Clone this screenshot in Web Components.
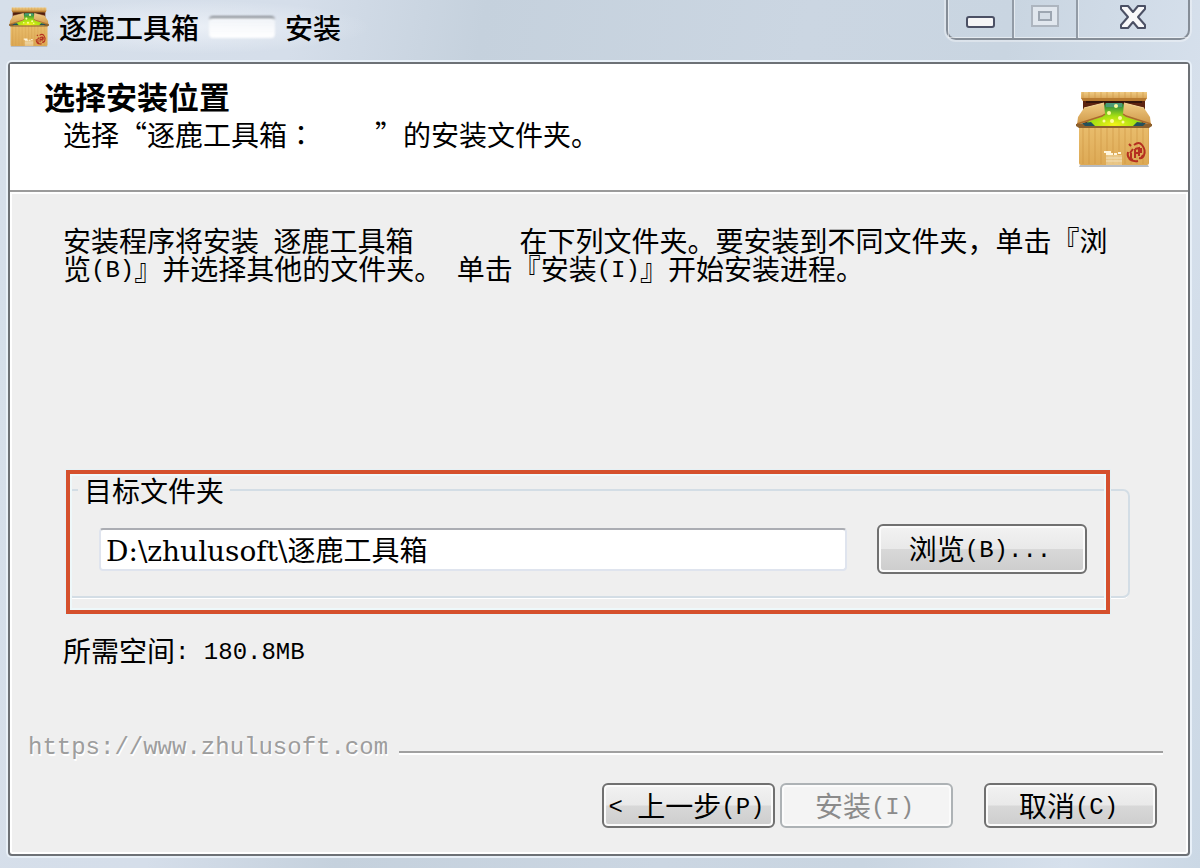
<!DOCTYPE html>
<html lang="zh-CN">
<head>
<meta charset="utf-8">
<title>逐鹿工具箱 安装</title>
<style>
  html, body {
    margin: 0;
    min-height: 100vh;
  }
  body {
    font: 28px/28px "Noto Sans CJK SC", sans-serif;
    color: #000;
  }
</style>
</head>
<body>
<setup-window></setup-window>

<script>
(function () {
  function define(name, html, setup) {
    const template = document.createElement("template");
    template.innerHTML = html.trim();
    customElements.define(name, class extends HTMLElement {
      constructor() {
        super();
        this.attachShadow({ mode: "open" });
        this.shadowRoot.appendChild(template.content.cloneNode(true));
      }
      connectedCallback() {
        if (setup) setup(this, this.shadowRoot);
      }
    });
  }

  // Half-width text: two characters take about one CJK cell.
  // No whitespace before the slot, it would show up in the line.
  define("half-width", `
    <style>
      :host {
        font-family: "Liberation Mono", monospace;
        font-size: 24px;
        line-height: 20px;
        vertical-align: 3px;
      }
      slot { white-space: pre; }
    </style><slot></slot>
  `);

  // Cardboard box, used in the title bar and in the page header
  define("box-icon", `
    <style>
      :host { display: block; flex: none; width: 76px; height: 76px; }
      svg { display: block; width: 100%; height: 100%; }
    </style>
    <svg viewBox="0 0 76 76" aria-hidden="true">
      <defs>
        <linearGradient id="front" x1="0" y1="0" x2="0" y2="1">
          <stop offset="0" stop-color="#e9bd6c"/>
          <stop offset="1" stop-color="#dda955"/>
        </linearGradient>
        <linearGradient id="flap" x1="0" y1="0" x2="0" y2="1">
          <stop offset="0" stop-color="#f0cb83"/>
          <stop offset="1" stop-color="#cf9747"/>
        </linearGradient>
        <radialGradient id="glow" cx=".5" cy=".9" r=".8">
          <stop offset="0" stop-color="#f4f218"/>
          <stop offset=".45" stop-color="#a4df12"/>
          <stop offset="1" stop-color="#2f8b3e"/>
        </radialGradient>
        <pattern id="ribs" width="6" height="8" patternUnits="userSpaceOnUse">
          <rect width="2" height="8" fill="#c98f3c" opacity=".28"/>
        </pattern>
      </defs>
      <path d="M4 74h68l1 2H3z" fill="#b8bcc2"/>
      <path d="M7 8h62v27H7z" fill="#5d2410"/>
      <path d="M10 9h56v3H10z" fill="#34150b"/>
      <path d="M5 1h66v6l-2 3H7L5 7z" fill="url(#flap)"/>
      <path d="M5 1h66v6H5z" fill="url(#ribs)"/>
      <path d="M5 7l2 3h62l2-3z" fill="#b87b31"/>
      <path d="M30 12h16l8 7 16 17H6l17-15z" fill="url(#glow)"/>
      <path d="M30 12h16v4H30z" fill="#4c9a77"/>
      <path d="M1 33l14-2 4 4H2zM75 33l-14-2-4 4h17z" fill="#23515d"/>
      <path d="M8 17l20-5 1 11-3 3L1 34l1-8z" fill="url(#flap)"/>
      <path d="M68 17l-20-5-1 11 3 3 25 8-1-8z" fill="url(#flap)"/>
      <path d="M8 17l20-5M68 17l-20-5" stroke="#f6d899" fill="none"/>
      <path d="M1 33l25-8 3-2M75 33l-25-8-3-2" stroke="#a96b2c" stroke-width="1.5" fill="none"/>
      <path d="M3 35h70v37q0 2-2 2H5q-2 0-2-2z" fill="url(#front)"/>
      <path d="M3 35h70v38H3z" fill="url(#ribs)"/>
      <path d="M0 33h7l2 2h58l2-2h7v2l-3 2H3l-3-2z" fill="#8c602c"/>
      <g fill="#fffb9c">
        <circle cx="40" cy="15" r="2"/><circle cx="33" cy="22" r="2"/>
        <circle cx="44" cy="27" r="2"/><circle cx="36" cy="30" r="2"/>
        <circle cx="28" cy="30" r="1.5"/><circle cx="47" cy="31" r="1.5"/>
      </g>
      <path d="M30 64h16v10H30z" fill="#f0d8a7" opacity=".6"/>
      <path d="M28 61h7M30 63h7M38 63h3M42 62h3" stroke="#fff5db" stroke-width="2" fill="none"/>
      <path d="M30 67h16M30 70h16" stroke="#f3e0b8" fill="none"/>
      <path d="M53 53l2 2M58 54q5-4 8 0 4 5 2 10-1 4-5 3M52 61q-1 4 1 6l4 2M57 58l-3 4M55 62v5M59 58v9M59 58l4-1v8M59 62h4M65 57v5M53 68q4 3 9 2M65 67l2-3" stroke="#b52f20" stroke-width="2" fill="none"/>
    </svg>
  `);

  define("caption-buttons", `
    <style>
      :host {
        display: flex;
        box-sizing: border-box;
        height: 40px;
        border: 2px solid #858d97;
        border-top: 0;
        border-radius: 0 0 10px 10px;
        box-shadow: 0 0 0 2px rgba(255, 255, 255, .35);
      }
      button {
        display: flex;
        align-items: center;
        justify-content: center;
        width: 66px;
        padding: 0 0 4px;
        border: 0;
        border-right: 2px solid #929ba6;
        background: none;
        box-shadow: inset 1px -1px 0 rgba(255, 255, 255, .5);
      }
      button:disabled { width: 64px; }
      button:last-child { width: 110px; border: 0; }
    </style>
    <button aria-label="最小化">
      <svg width="30" height="30"><rect x="2" y="15" width="27" height="10" rx="2" fill="#f5f5f6" stroke="#4b5064" stroke-width="2"/></svg>
    </button>
    <button aria-label="最大化" disabled>
      <svg width="30" height="30"><path d="M2 4h26v20H2z" fill="#e1e7ee" stroke="#adb5bf" stroke-width="2"/><path d="M9 10h12v8H9z" fill="#d5dde6" stroke="#9da6b1" stroke-width="2"/></svg>
    </button>
    <button aria-label="关闭">
      <svg width="30" height="30"><path d="M3 4h7l5 6 5-6h7v3l-7 8 7 8v3h-7l-5-6-5 6H3v-3l7-8-7-8z" fill="#f8f8f9" stroke="#4b5064" stroke-width="2" stroke-linejoin="round"/></svg>
    </button>
  `);

  define("title-bar", `
    <style>
      :host {
        display: flex;
        align-items: flex-start;
        justify-content: space-between;
        height: 62px;
        padding: 0 0 0 1px;
      }
      .caption {
        display: flex;
        align-items: center;
        gap: 10px;
        height: 54px;
        padding-right: 30px;
        background: radial-gradient(closest-side, rgba(240, 244, 250, .8), rgba(240, 244, 250, 0));
        font-weight: 500;
      }
      box-icon { width: 40px; height: 40px; }
      .blank {
        width: 66px;
        height: 20px;
        border-top: 2px solid #80858b;
        border-radius: 4px;
        background: linear-gradient(rgba(255, 255, 255, .5), #fff);
        filter: blur(1px);
      }
    </style>
    <div class="caption">
      <box-icon></box-icon>
      <span><slot></slot></span>
      <span class="blank"></span>
      <span><slot name="action"></slot></span>
    </div>
    <caption-buttons></caption-buttons>
  `);

  define("page-header", `
    <style>
      :host {
        display: flex;
        justify-content: space-between;
        align-items: center;
        box-sizing: border-box;
        min-height: 128px;
        padding: 4px 36px 0 34px;
        background: #fff;
        border-bottom: 2px solid #9b9b9b;
        box-shadow: 0 2px 0 #fff;
      }
      .text { align-self: flex-start; padding-top: 10px; }
      h1 { margin: 0; font-size: 31px; line-height: 36px; }
      p { margin: 0 0 0 19px; line-height: 40px; }
    </style>
    <div class="text">
      <h1><slot name="title"></slot></h1>
      <p><slot></slot></p>
    </div>
    <box-icon></box-icon>
  `);

  define("push-button", `
    <style>
      :host { display: block; flex: none; width: 173px; height: 45px; }
      button {
        box-sizing: border-box;
        width: 100%;
        height: 100%;
        padding: 0 4px 2px 0;
        font: inherit;
        color: #000;
        white-space: nowrap;
        border: 2px solid #707070;
        border-radius: 6px;
        background: linear-gradient(#f2f2f2, #e9e9e9 49%, #d8d8d8 51%, #cdcdcd);
        box-shadow: inset 0 0 0 2px #fbfbfb;
      }
      button:disabled {
        color: #8b8b8b;
        border-color: #adb2b5;
        background: #f4f4f4;
      }
    </style>
    <button type="button"><slot></slot></button>
  `, (host, root) => {
    root.querySelector("button").disabled = host.hasAttribute("disabled");
  });

  define("folder-group", `
    <style>
      :host { display: block; position: relative; }
      fieldset {
        display: flex;
        align-items: center;
        gap: 30px;
        min-width: 0;
        margin: 0;
        padding: 20px 41px 22px 31px;
        border: 2px solid #d3dde5;
        border-radius: 7px;
        box-shadow: 0 2px 0 -1px #fff;
      }
      legend { margin-left: -21px; padding: 0 6px; }
      input {
        flex: 1;
        min-width: 0;
        box-sizing: border-box;
        height: 43px;
        padding: 0 5px;
        font: 28px "DejaVu Serif", "Noto Sans CJK SC", serif;
        color: #000;
        background: #fff;
        border: 2px solid #dfe4ee;
        border-top-color: #abadb3;
        border-radius: 4px;
      }
      ::slotted(push-button) { width: 210px; height: 50px; }
      /* callout frame drawn over the group */
      .callout {
        position: absolute;
        inset: -6px 20px -16px 0;
        border: 4px solid #d5502d;
        box-shadow: 0 0 0 1px #e5f1f5, inset 0 0 0 2px #eef8fa;
        pointer-events: none;
      }
    </style>
    <fieldset>
      <legend><label for="path"></label></legend>
      <input id="path" type="text" spellcheck="false">
      <slot></slot>
    </fieldset>
    <div class="callout"></div>
  `, (host, root) => {
    root.querySelector("label").textContent = host.getAttribute("label");
    root.querySelector("input").value = host.getAttribute("value");
  });

  define("branding-line", `
    <style>
      :host { display: flex; align-items: center; gap: 11px; margin: 0 25px 0 18px; }
      a {
        color: #9d9d9d;
        text-decoration: none;
        text-shadow: 1px 2px 0 #fff;
        font: 24px/28px "Liberation Mono", monospace;
      }
      hr {
        flex: 1;
        height: 2px;
        margin: 8px 0 0;
        border: 0;
        background: #a0a0a0;
        box-shadow: 0 2px 0 #fff;
      }
    </style>
    <a></a><hr>
  `, (host, root) => {
    const link = root.querySelector("a");
    link.href = link.textContent = host.getAttribute("href");
  });

  define("setup-window", `
    <style>
      :host {
        display: flex;
        flex-direction: column;
        box-sizing: border-box;
        min-height: 100vh;
        padding: 0 10px 12px 8px;
        background: linear-gradient(100deg, #d6dfea, #d5deea 22%, #c5d1dd 36%, #cbd6e2 60%, #c9d5e1 75%, #d6e0ec 90%, #cbd8e5);
      }
      main {
        flex: 1;
        display: flex;
        flex-direction: column;
        border: 2px solid #6d7176;
        border-radius: 4px;
        background: #efefef;
        box-shadow: 0 0 0 2px #e8f0f8, inset 0 0 0 2px #fff;
      }
      .content { padding: 34px 58px 0 53px; }
      p { margin: 0; }
      .intro { min-height: 250px; }
      .blank { display: inline-block; width: 106px; }
      .short { width: 60px; }
      .colon { font-family: "Noto Sans CJK TC", sans-serif; }
      folder-group { margin-left: 3px; }
      .space { margin-top: 38px; }
      branding-line { margin-top: auto; }
      .actions {
        display: flex;
        justify-content: flex-end;
        gap: 5px;
        padding: 21px 31px 26px;
      }
      .cancel { margin-left: 26px; }
    </style>
    <title-bar>逐鹿工具箱<span slot="action">安装</span></title-bar>
    <main>
      <page-header>
        <span slot="title">选择安装位置</span>
        选择“逐鹿工具箱<span class="colon" lang="zh-TW">：</span><span class="blank short"></span>”的安装文件夹。
      </page-header>
      <div class="content">
        <p class="intro">安装程序将安装<half-width> </half-width>逐鹿工具箱<span class="blank"></span>在下列文件夹。要安装到不同文件夹，单击『浏<br>览<half-width>(B)</half-width>』并选择其他的文件夹。<half-width> </half-width>单击『安装<half-width>(I)</half-width>』开始安装进程。</p>
        <folder-group label="目标文件夹" value="D:\\zhulusoft\\逐鹿工具箱">
          <push-button>浏览<half-width>(B)...</half-width></push-button>
        </folder-group>
        <p class="space">所需空间<half-width>: 180.8MB</half-width></p>
      </div>
      <branding-line href="https://www.zhulusoft.com"></branding-line>
      <div class="actions">
        <push-button><half-width>&lt; </half-width>上一步<half-width>(P)</half-width></push-button>
        <push-button disabled>安装<half-width>(I)</half-width></push-button>
        <push-button class="cancel">取消<half-width>(C)</half-width></push-button>
      </div>
    </main>
  `);
})();
</script>
</body>
</html>
